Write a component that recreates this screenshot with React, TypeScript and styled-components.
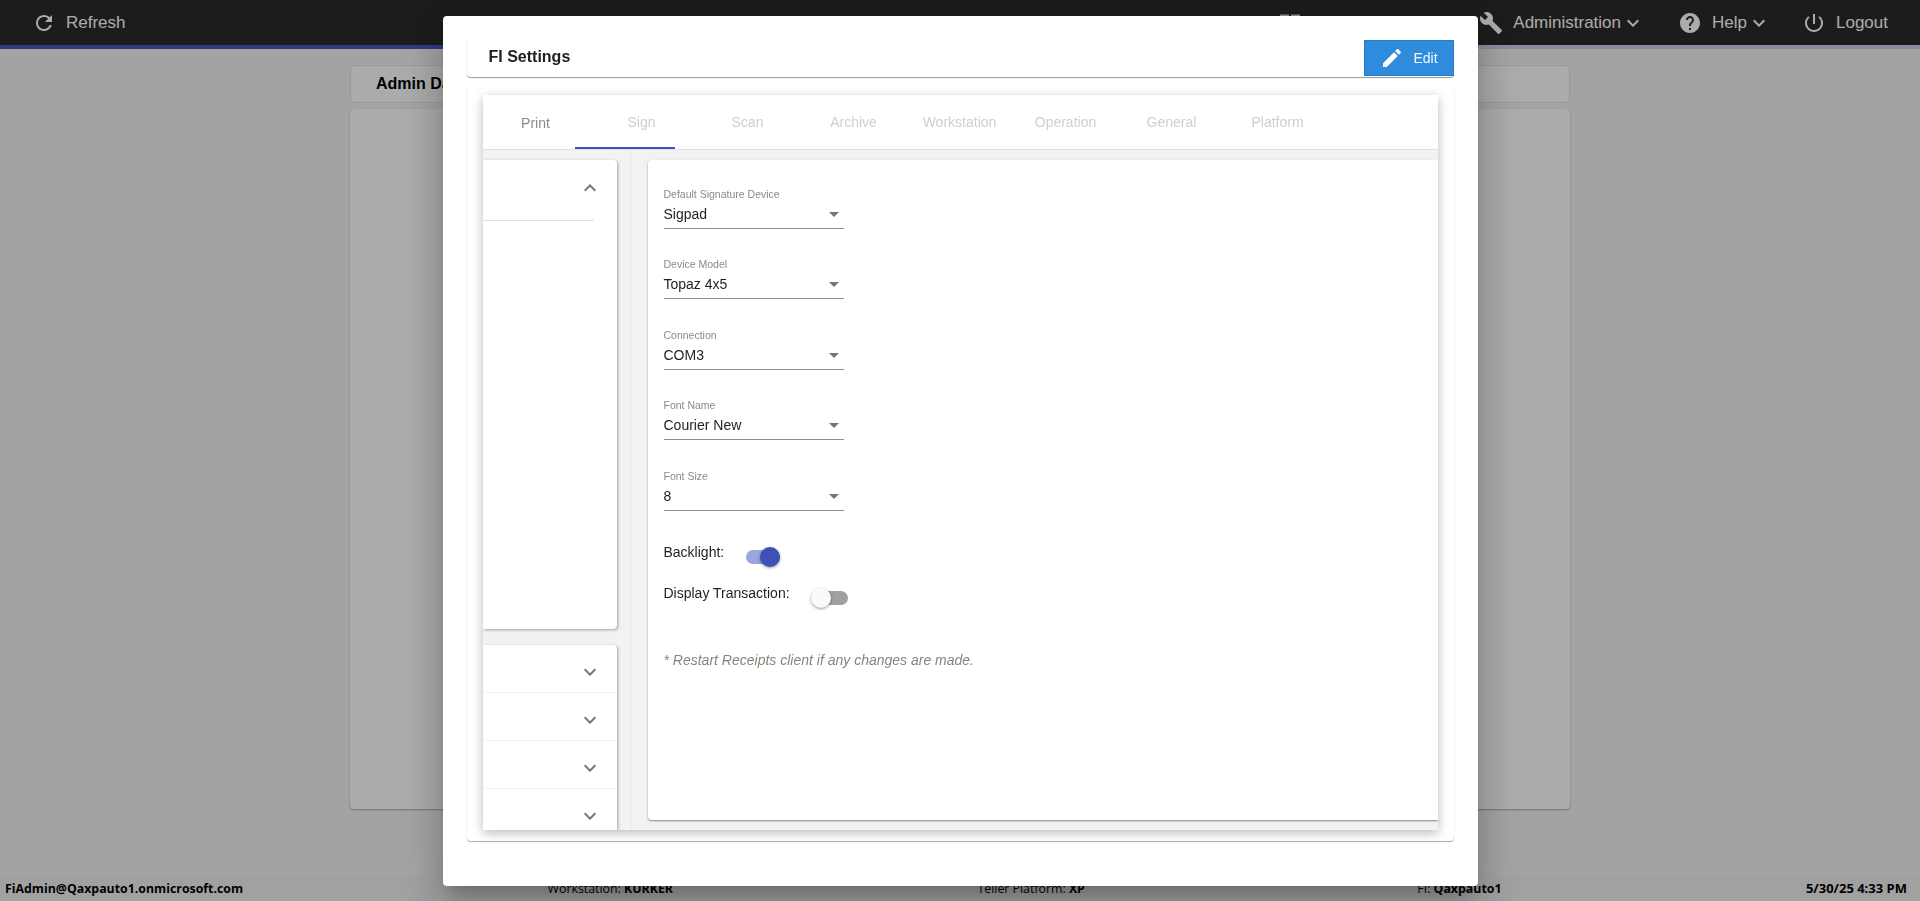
import React from "react";
import styled, { createGlobalStyle } from "styled-components";

const Global = createGlobalStyle`
  html, body { margin: 0; padding: 0; height: 100%; overflow: hidden; }
  body { font-family: "Liberation Sans", Arial, sans-serif; background: #f4f4f4; }
  #root { height: 100%; }
`;

const Page = styled.div`
  height: 901px;
  display: flex;
  flex-direction: column;
`;
const Header = styled.header`
  height: 45px;
  background: #2a2a2a;
  display: flex;
  align-items: center;
  justify-content: space-between;
  padding: 0 32px 0 32px;
  color: #fff;
`;
const HeaderLine = styled.div`
  height: 4px;
  background: linear-gradient(to right, #4857c5 0%, #4857c5 25%, #cfd1ee 75%, #cfd1ee 100%);
`;
const NavGroup = styled.nav`
  display: flex;
  align-items: center;
`;
const NavItem = styled.div<{ $gap?: number }>`
  display: flex;
  align-items: center;
  font-size: 17px;
  color: #fff;
  margin-left: ${(p) => p.$gap ?? 0}px;
  svg { flex: none; fill: currentColor; }
`;
const HiddenIcon = styled(NavItem)`
  color: #d8d8d8;
`;
const NavLabel = styled.span`
  margin-left: 10px;
`;
const Main = styled.main`
  flex: 1;
  padding-top: 16px;
  display: flex;
  flex-direction: column;
  align-items: center;
`;
const TitleBar = styled.div`
  width: 1220px;
  height: 38px;
  box-sizing: border-box;
  background: #fff;
  border: 1px solid #e4e4e4;
  border-radius: 4px;
  padding-left: 25px;
  display: flex;
  align-items: center;
  font-size: 16px;
  font-weight: 700;
  color: #000;
`;
const BlankCard = styled.div`
  width: 1220px;
  height: 700px;
  margin-top: 6px;
  background: #fff;
  border-radius: 4px;
  box-shadow: 0 1px 2px rgba(0, 0, 0, 0.3);
`;
const Footer = styled.footer`
  height: 26px;
  background: #f0f0f2;
  display: flex;
  align-items: center;
  justify-content: space-between;
  padding: 0 13px 0 5px;
  font-family: "Open Sans", sans-serif;
  font-size: 12.35px;
  color: #000;
  b { font-weight: 700; }
`;
const FooterCell = styled.span<{ $shift?: number; $size?: number }>`
  margin-left: ${(p) => p.$shift ?? 0}px;
  font-size: ${(p) => (p.$size ? `${p.$size}px` : "inherit")};
  white-space: nowrap;
`;

const Overlay = styled.div`
  position: fixed;
  inset: 0;
  background: rgba(0, 0, 0, 0.33);
  display: flex;
  justify-content: center;
  align-items: flex-start;
`;
const Modal = styled.div`
  width: 1035px;
  height: 870px;
  margin-top: 16px;
  box-sizing: border-box;
  padding: 24px;
  background: #fff;
  border-radius: 4px;
  box-shadow: 0 11px 15px -7px rgba(0, 0, 0, 0.2), 0 24px 38px 3px rgba(0, 0, 0, 0.14), 0 9px 46px 8px rgba(0, 0, 0, 0.12);
`;
const ModalHead = styled.div`
  height: 37px;
  display: flex;
  justify-content: space-between;
  border-radius: 4px;
  box-shadow: 0 1px 1px rgba(0, 0, 0, 0.4), 0 0 2px rgba(0, 0, 0, 0.04);
`;
const ModalTitle = styled.h2`
  margin: 0;
  padding-left: 22px;
  font-size: 16px;
  font-weight: 700;
  line-height: 34px;
  color: #212121;
`;
const EditButton = styled.button`
  width: 90px;
  height: 36px;
  box-sizing: border-box;
  border: 1px solid #2a7cc4;
  border-radius: 0;
  background: #2f8cdc;
  color: #f4f8fc;
  font-family: inherit;
  font-size: 14px;
  display: flex;
  align-items: center;
  padding: 0 0 0 15px;
  svg { fill: #fff; margin-right: 10px; }
`;
const Panel = styled.div`
  margin-top: 8px;
  height: 756px;
  box-sizing: border-box;
  padding: 10px 16px 11px;
  border-radius: 4px;
  box-shadow: 0 1px 1px rgba(0, 0, 0, 0.33), 0 0 2px rgba(0, 0, 0, 0.04);
`;
const Sheet = styled.div`
  height: 735px;
  display: flex;
  flex-direction: column;
  background: #fff;
  box-shadow: 0 3px 10px rgba(0, 0, 0, 0.28);
  overflow: hidden;
`;
const Tabs = styled.div`
  position: relative;
  height: 54px;
  flex: none;
  display: flex;
  border-bottom: 1px solid #e0e0e0;
`;
const Tab = styled.div<{ $on?: boolean }>`
  width: 106px;
  display: flex;
  align-items: center;
  justify-content: center;
  font-size: 14px;
  color: ${(p) => (p.$on ? "#8b8b8b" : "#cfcfcf")};
  padding-top: ${(p) => (p.$on ? 1 : 0)}px;
  white-space: nowrap;
`;
const Indicator = styled.span`
  position: absolute;
  left: 92px;
  bottom: 0;
  width: 100px;
  height: 2px;
  background: #3f51b5;
`;
const Body = styled.div`
  flex: 1;
  min-height: 0;
  display: flex;
  background: #f2f2f2;
`;
const SideColumn = styled.div`
  width: 149px;
  box-sizing: border-box;
  padding: 10px 14px 0 0;
  border-right: 1px solid #ebebeb;
  display: flex;
  flex-direction: column;
  gap: 16px;
  flex: none;
`;
const SideCard = styled.div<{ $height: number }>`
  height: ${(p) => p.$height}px;
  flex: none;
  background: #fff;
  border-radius: 0 4px 4px 0;
  box-shadow: 1px 1px 3px rgba(0, 0, 0, 0.35);
`;
const SideHead = styled.div`
  height: 61px;
  width: 111px;
  box-sizing: border-box;
  padding-top: 16px;
  display: flex;
  justify-content: flex-end;
  border-bottom: 1px solid #e0e0e0;
  svg { fill: #757575; margin-right: -8px; }
`;
const SideRow = styled.div`
  height: 48px;
  box-sizing: border-box;
  padding: 15px 15px 0 0;
  display: flex;
  justify-content: flex-end;
  border-bottom: 1px solid #f3f3f3;
  svg { fill: #757575; flex: none; }
`;
const ContentWrap = styled.div`
  flex: 1;
  padding: 10px 0 10px 16px;
  display: flex;
`;
const ContentCard = styled.div`
  flex: 1;
  background: #fff;
  border-radius: 4px 0 0 4px;
  box-shadow: 0 1px 2px rgba(0, 0, 0, 0.45);
  padding: 27.7px 16px 0;
`;
const Fields = styled.div`
  display: flex;
  flex-direction: column;
  gap: 29.55px;
`;
const Field = styled.div`
  width: 180px;
  height: 41px;
  box-sizing: border-box;
  border-bottom: 1px solid #8f8f8f;
  position: relative;
`;
const FieldLabel = styled.label`
  display: block;
  font-size: 10.5px;
  line-height: 12px;
  color: #8a8a8a;
`;
const FieldValue = styled.div`
  margin-top: 4px;
  font-size: 14px;
  line-height: 20px;
  color: #1f1f1f;
`;
const Caret = styled.svg`
  position: absolute;
  right: -2px;
  top: 14px;
  fill: #757575;
`;
const SwitchRows = styled.div`
  margin-top: 33px;
  display: flex;
  flex-direction: column;
  gap: 21px;
`;
const SwitchRow = styled.div`
  height: 20px;
  display: flex;
  font-size: 14px;
  line-height: 16px;
  color: #1f1f1f;
`;
const SwitchTrack = styled.span<{ $on?: boolean; $gap: number }>`
  position: relative;
  width: 34px;
  height: 14px;
  margin: 6px 0 0 ${(p) => p.$gap}px;
  border-radius: 7px;
  background: ${(p) => (p.$on ? "#9ca5dc" : "#a0a0a0")};
`;
const SwitchThumb = styled.span<{ $on?: boolean }>`
  position: absolute;
  top: -3px;
  left: ${(p) => (p.$on ? 14 : -3)}px;
  width: 20px;
  height: 20px;
  border-radius: 50%;
  background: ${(p) => (p.$on ? "#3f51b5" : "#fafafa")};
  box-shadow: 0 1px 3px rgba(0, 0, 0, 0.4);
`;
const Note = styled.p`
  margin: 47px 0 0;
  font-size: 14px;
  line-height: 16px;
  font-style: italic;
  color: #8b837c;
`;

const P = {
  refresh: "M17.65 6.35C16.2 4.9 14.21 4 12 4c-4.42 0-7.99 3.58-7.99 8s3.57 8 7.99 8c3.73 0 6.84-2.55 7.73-6h-2.08c-.82 2.33-3.04 4-5.65 4-3.31 0-6-2.69-6-6s2.69-6 6-6c1.66 0 3.14.69 4.22 1.78L13 11h7V4l-2.35 2.35z",
  build: "M22.7 19l-9.1-9.1c.9-2.3.4-5-1.5-6.9-2-2-5-2.4-7.4-1.3L9 6 6 9 1.6 4.7C.4 7.1.9 10.1 2.9 12.1c1.9 1.9 4.6 2.4 6.9 1.5l9.1 9.1c.4.4 1 .4 1.4 0l2.3-2.3c.5-.4.5-1.1.1-1.4z",
  help: "M12 2C6.48 2 2 6.48 2 12s4.48 10 10 10 10-4.48 10-10S17.52 2 12 2zm1 17h-2v-2h2v2zm2.07-7.75l-.9.92C13.45 12.9 13 13.5 13 15h-2v-.5c0-1.1.45-2.1 1.17-2.83l1.24-1.26c.37-.36.59-.86.59-1.41 0-1.1-.9-2-2-2s-2 .9-2 2H8c0-2.21 1.79-4 4-4s4 1.79 4 4c0 .88-.36 1.68-.93 2.25z",
  power: "M13 3h-2v10h2V3zm4.83 2.17l-1.42 1.42C17.99 7.86 19 9.81 19 12c0 3.87-3.13 7-7 7s-7-3.13-7-7c0-2.19 1.01-4.14 2.58-5.42L6.17 5.17C4.23 6.82 3 9.26 3 12c0 4.97 4.03 9 9 9s9-4.03 9-9c0-2.74-1.23-5.18-3.17-6.83z",
  edit: "M3 17.25V21h3.75L17.81 9.94l-3.75-3.75L3 17.25zM20.71 7.04c.39-.39.39-1.02 0-1.41l-2.34-2.34c-.39-.39-1.02-.39-1.41 0l-1.83 1.83 3.75 3.75 1.83-1.83z",
  more: "M16.59 8.59L12 13.17 7.41 8.59 6 10l6 6 6-6z",
  less: "M12 8l-6 6 1.41 1.41L12 10.83l4.59 4.58L18 14z",
  drop: "M7 10l5 5 5-5z",
  dash: "M2 3.5h9v9H2zM13 3.5h9v9h-9zM2 14.5h9v9H2zM13 14.5h9v9h-9z",
};
const Icon = ({ d }: { d: string }) => (
  <svg width="24" height="24" viewBox="0 0 24 24" aria-hidden="true"><path d={d} /></svg>
);

const tabs = ["Print", "Sign", "Scan", "Archive", "Workstation", "Operation", "General", "Platform"];
const fields = [
  ["Default Signature Device", "Sigpad"],
  ["Device Model", "Topaz 4x5"],
  ["Connection", "COM3"],
  ["Font Name", "Courier New"],
  ["Font Size", "8"],
];

export default function App() {
  return (
    <Page>
      <Global />
      <Header>
        <NavItem><Icon d={P.refresh} /><NavLabel>Refresh</NavLabel></NavItem>
        <NavGroup>
          <HiddenIcon><Icon d={P.dash} /></HiddenIcon>
          <NavItem $gap={177}><Icon d={P.build} /><NavLabel>Administration</NavLabel><Icon d={P.more} /></NavItem>
          <NavItem $gap={33}><Icon d={P.help} /><NavLabel>Help</NavLabel><Icon d={P.more} /></NavItem>
          <NavItem $gap={31}><Icon d={P.power} /><NavLabel>Logout</NavLabel></NavItem>
        </NavGroup>
      </Header>
      <HeaderLine />
      <Main>
        <TitleBar>Admin Dashboard</TitleBar>
        <BlankCard />
      </Main>
      <Footer>
        <FooterCell><b>FiAdmin@Qaxpauto1.onmicrosoft.com</b></FooterCell>
        <FooterCell>Workstation: <b>KURKER</b></FooterCell>
        <FooterCell>Teller Platform: <b>XP</b></FooterCell>
        <FooterCell $shift={28}>FI: <b>Qaxpauto1</b></FooterCell>
        <FooterCell $size={13}><b>5/30/25 4:33 PM</b></FooterCell>
      </Footer>
      <Overlay>
        <Modal>
          <ModalHead>
            <ModalTitle>FI Settings</ModalTitle>
            <EditButton><Icon d={P.edit} />Edit</EditButton>
          </ModalHead>
          <Panel>
            <Sheet>
              <Tabs>
                {tabs.map((t, i) => <Tab key={t} $on={i === 0}>{t}</Tab>)}
                <Indicator />
              </Tabs>
              <Body>
                <SideColumn>
                  <SideCard $height={469}>
                    <SideHead><Icon d={P.less} /></SideHead>
                  </SideCard>
                  <SideCard $height={192}>
                    <SideRow><Icon d={P.more} /></SideRow>
                    <SideRow><Icon d={P.more} /></SideRow>
                    <SideRow><Icon d={P.more} /></SideRow>
                    <SideRow><Icon d={P.more} /></SideRow>
                  </SideCard>
                </SideColumn>
                <ContentWrap>
                  <ContentCard>
                    <Fields>
                      {fields.map(([l, v]) => (
                        <Field key={l}>
                          <FieldLabel>{l}</FieldLabel>
                          <FieldValue>{v}</FieldValue>
                          <Caret width="24" height="24" viewBox="0 0 24 24"><path d={P.drop} /></Caret>
                        </Field>
                      ))}
                    </Fields>
                    <SwitchRows>
                      <SwitchRow>Backlight:<SwitchTrack $on $gap={22}><SwitchThumb $on /></SwitchTrack></SwitchRow>
                      <SwitchRow>Display Transaction:<SwitchTrack $gap={24}><SwitchThumb /></SwitchTrack></SwitchRow>
                    </SwitchRows>
                    <Note>* Restart Receipts client if any changes are made.</Note>
                  </ContentCard>
                </ContentWrap>
              </Body>
            </Sheet>
          </Panel>
        </Modal>
      </Overlay>
    </Page>
  );
}
